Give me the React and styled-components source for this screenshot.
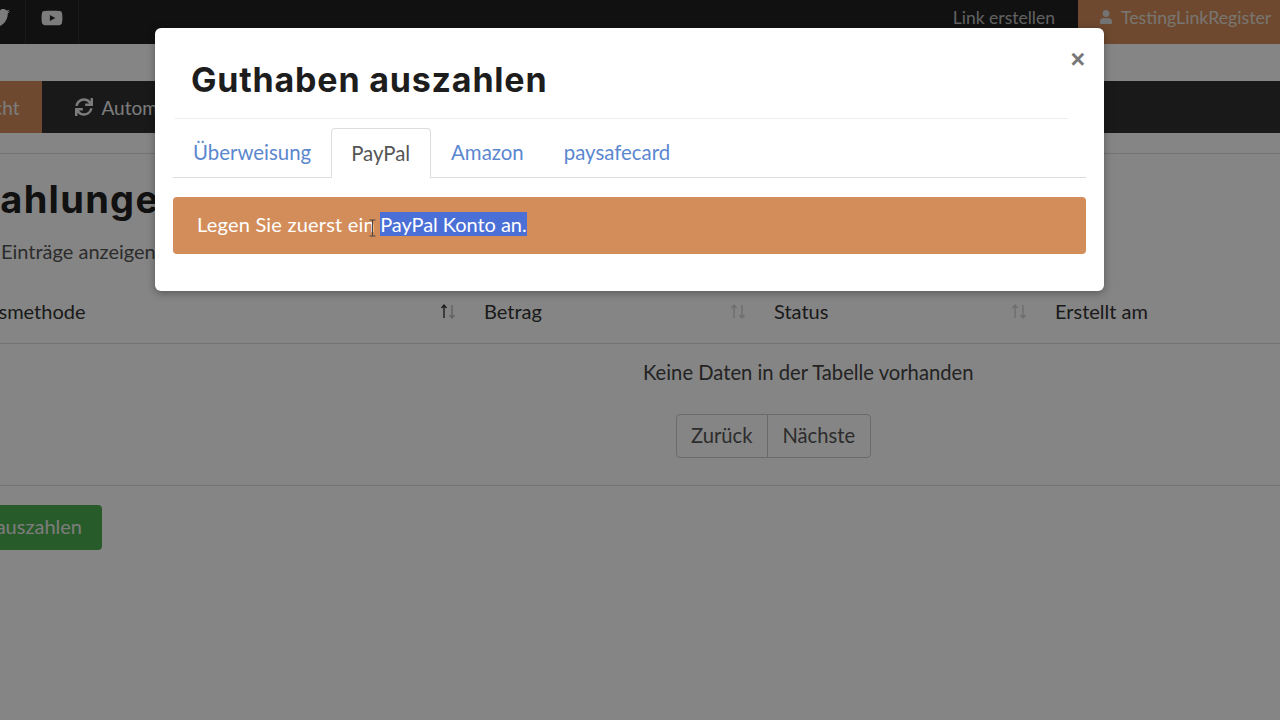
import React from 'react'
import styled, { createGlobalStyle } from 'styled-components'
import { FaTwitter, FaYoutube, FaSync, FaUser } from 'react-icons/fa'

const GlobalStyle = createGlobalStyle`
  html, body { margin: 0; padding: 0; background: #fff; }
  body { font-family: "Lato", "Open Sans", sans-serif; color: #333; overflow: hidden; }
`

const Page = styled.div`
  position: relative;
  width: 1280px;
  height: 720px;
  overflow: hidden;
`

const TopBar = styled.header`
  display: flex;
  align-items: stretch;
  height: 44px;
  background: #222;
  margin-left: -28px;
`

const SocialCell = styled.a`
  display: flex;
  align-items: center;
  justify-content: center;
  width: 52px;
  padding-bottom: 8px;
  box-sizing: content-box;
  color: #eee;
  font-size: 22px;
  border-right: 1px solid #333;
  &:first-child { border-left: 1px solid #333; }
`

const TopRight = styled.div`
  margin-left: auto;
  display: flex;
  align-items: stretch;
`

const TopLink = styled.a`
  display: flex;
  align-items: center;
  padding: 0 23px 10px 0;
  font-size: 17.5px;
  color: #bbb;
`

const UserButton = styled.a`
  display: flex;
  align-items: center;
  gap: 8px;
  width: 202px;
  box-sizing: border-box;
  padding: 0 0 10px 21px;
  font-size: 17.7px;
  color: #e8e0d8;
  background: #d38d5b;
  white-space: nowrap;
  svg { font-size: 14px; color: #ddd; }
`

const MainNav = styled.nav`
  display: flex;
  align-items: stretch;
  height: 52px;
  margin-top: 37px;
  background: #303030;
`

const NavItem = styled.a`
  display: flex;
  align-items: center;
  gap: 8px;
  font-size: 19px;
  white-space: nowrap;
  color: #eee;
  padding: 0 ${p => (p.$active ? '23px' : '33px')};
  background: ${p => (p.$active ? '#d38d5b' : 'transparent')};
  margin-left: ${p => (p.$active ? '-84px' : '0')};
  svg { font-size: 18px; }
`

const Content = styled.main`
  margin-left: -190px;
  margin-top: 20px;
  border-top: 1px solid #ddd;
`

const Title = styled.h1`
  margin: 23px 0 0;
  padding-left: 90px;
  font-family: "Inter", sans-serif;
  font-size: 38px;
  line-height: 44px;
  font-weight: 700;
  letter-spacing: 1.3px;
  color: #222;
  white-space: nowrap;
`

const LengthRow = styled.div`
  margin-top: 18px;
  padding-left: 191px;
  font-size: 20px;
  line-height: 24px;
  color: #555;
  white-space: nowrap;
`

const TableHead = styled.div`
  display: grid;
  grid-template-columns: 664px 290px 281px 300px;
  margin-top: 24px;
  height: 57px;
  box-sizing: border-box;
  padding-bottom: 9px;
  border-bottom: 1px solid #ddd;
`

const HeadCell = styled.div`
  display: flex;
  align-items: center;
  justify-content: space-between;
  padding: 0 17px 0 ${p => (p.$offset ? p.$offset : '10px')};
  font-size: 20px;
  color: #333;
`

const Arrows = styled.svg`
  width: 18px;
  height: 18px;
  flex: none;
`

const EmptyText = styled.p`
  margin: 16px 0 0 833px;
  font-size: 20.2px;
  line-height: 24px;
  color: #444;
  white-space: nowrap;
`

const Pager = styled.div`
  display: inline-flex;
  margin: 30px 0 0 866px;
  border: 1px solid #ccc;
  border-radius: 4px;
  height: 42px;
`

const PageButton = styled.span`
  display: flex;
  align-items: center;
  padding: 0 15px 2px 14px;
  font-size: 20.2px;
  color: #555;
  & + & { border-left: 1px solid #ccc; }
`

const Rule = styled.hr`
  margin: 27px 0 0;
  border: 0;
  border-top: 1px solid #ddd;
`

const PayoutButton = styled.button`
  display: block;
  margin: 19px 0 0 120px;
  width: 172px;
  height: 45px;
  padding: 0 20px 3px 0;
  border: 0;
  border-radius: 4px;
  background: #4caf50;
  color: #eee;
  font-family: inherit;
  font-size: 20px;
  text-align: right;
  white-space: nowrap;
  direction: rtl;
`

const Backdrop = styled.div`
  position: absolute;
  inset: 0;
  background: rgba(0, 0, 0, 0.48);
`

const Modal = styled.section`
  position: absolute;
  left: 155px;
  top: 28px;
  width: 949px;
  height: 263px;
  box-sizing: border-box;
  padding: 0 18px;
  background: #fff;
  border-radius: 6px;
  box-shadow: 0 2px 8px rgba(0, 0, 0, 0.35);
`

const ModalHeader = styled.div`
  margin: 0 18px 0 2px;
  height: 91px;
  box-sizing: border-box;
  padding: 31px 0 0 16px;
  border-bottom: 1px solid #eee;
`

const ModalTitle = styled.h2`
  margin: 0;
  font-family: "Inter", sans-serif;
  font-size: 34px;
  line-height: 42px;
  font-weight: 700;
  letter-spacing: 0.8px;
  color: #1d1d1d;
`

const Close = styled.button`
  position: absolute;
  right: 19px;
  top: 19px;
  padding: 0;
  border: 0;
  background: none;
  font-family: "Liberation Sans", sans-serif;
  font-size: 25px;
  line-height: 25px;
  font-weight: 700;
  color: #777;
`

const Tabs = styled.div`
  display: flex;
  align-items: flex-end;
  height: 50px;
  margin-top: 8px;
  box-sizing: content-box;
  border-bottom: 1px solid #ddd;
`

const Tab = styled.a`
  display: flex;
  align-items: center;
  box-sizing: border-box;
  height: 50px;
  padding: 0 ${p => (p.$active ? '20px' : '19px')} 2px 19px;
  font-size: 20.4px;
  color: ${p => (p.$active ? '#555' : '#5b87cf')};
  background: #fff;
  border: 1px solid ${p => (p.$active ? '#ddd' : 'transparent')};
  border-bottom: 0;
  border-radius: 4px 4px 0 0;
  margin-bottom: ${p => (p.$active ? '-1px' : '0')};
`

const Alert = styled.div`
  position: relative;
  margin-top: 19px;
  height: 57px;
  box-sizing: border-box;
  padding: 0 0 3px 24px;
  display: flex;
  align-items: center;
  font-size: 20px;
  letter-spacing: 0.2px;
  color: #fff;
  background: #d38d5b;
  border-radius: 4px;
  white-space: pre;
`

const Selected = styled.span`
  background: #4a6fd6;
  color: #fff;
  letter-spacing: -0.05px;
`

const Cursor = styled.svg`
  position: absolute;
  left: 195px;
  top: 22px;
  width: 9px;
  height: 18px;
`

function SortArrows({ up = 0.2, down = 0.2 }) {
  return (
    <Arrows viewBox="0 0 18 18" fill="none" stroke="#222" strokeWidth="1.4">
      <path opacity={up} d="M5 16V3M2.5 6 5 3l2.5 3" />
      <path opacity={down} d="M13 3v13M10.5 13l2.5 3 2.5-3" />
    </Arrows>
  )
}

export default function App() {
  return (
    <Page>
      <GlobalStyle />
      <TopBar>
        <SocialCell><FaTwitter /></SocialCell>
        <SocialCell><FaYoutube /></SocialCell>
        <TopRight>
          <TopLink>Link erstellen</TopLink>
          <UserButton><FaUser />TestingLinkRegister</UserButton>
        </TopRight>
      </TopBar>
      <MainNav>
        <NavItem $active>Übersicht</NavItem>
        <NavItem><FaSync />Automatische Auszahlung</NavItem>
      </MainNav>
      <Content>
        <Title>Auszahlungen</Title>
        <LengthRow>Einträge anzeigen</LengthRow>
        <TableHead>
          <HeadCell $offset="118px">Zahlungsmethode<SortArrows up={0.9} down={0.3} /></HeadCell>
          <HeadCell>Betrag<SortArrows /></HeadCell>
          <HeadCell>Status<SortArrows /></HeadCell>
          <HeadCell>Erstellt am</HeadCell>
        </TableHead>
        <EmptyText>Keine Daten in der Tabelle vorhanden</EmptyText>
        <Pager>
          <PageButton>Zurück</PageButton>
          <PageButton>Nächste</PageButton>
        </Pager>
        <Rule />
        <PayoutButton>Guthaben auszahlen</PayoutButton>
      </Content>
      <Backdrop />
      <Modal>
        <ModalHeader>
          <ModalTitle>Guthaben auszahlen</ModalTitle>
        </ModalHeader>
        <Close>×</Close>
        <Tabs>
          <Tab>Überweisung</Tab>
          <Tab $active>PayPal</Tab>
          <Tab>Amazon</Tab>
          <Tab>paysafecard</Tab>
        </Tabs>
        <Alert>
          Legen Sie zuerst ein <Selected>PayPal Konto an.</Selected>
          <Cursor viewBox="0 0 9 18" fill="none" stroke="#444" strokeWidth="1">
            <path d="M1.5 1h6M4.5 1v16M1.5 17h6" />
          </Cursor>
        </Alert>
      </Modal>
    </Page>
  )
}
